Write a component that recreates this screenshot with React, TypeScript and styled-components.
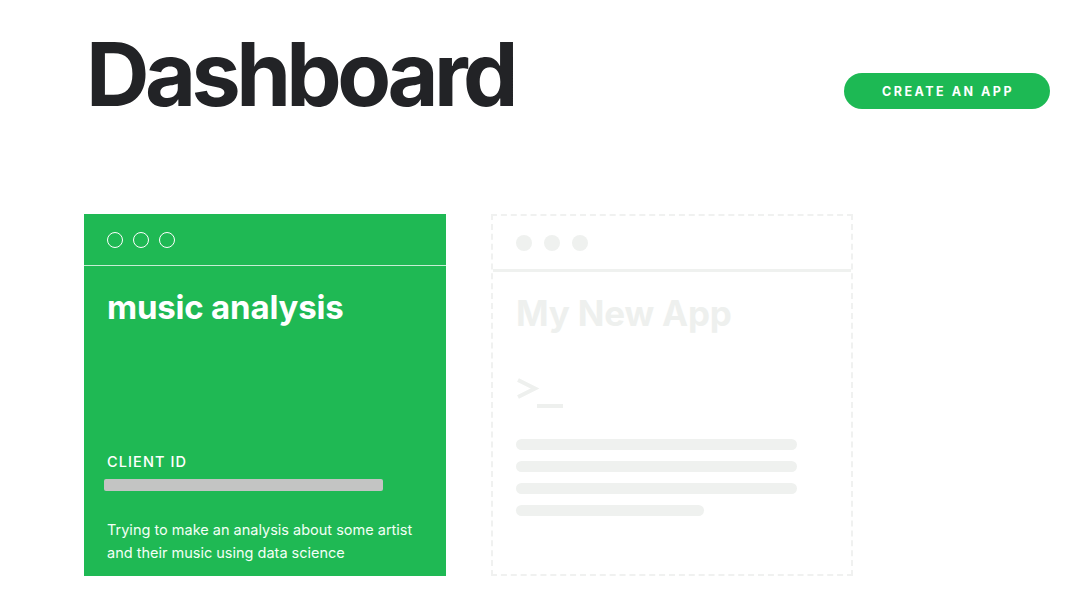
import React from "react";
import styled, { createGlobalStyle } from "styled-components";

const Global = createGlobalStyle`
  html, body { margin: 0; padding: 0; background: #ffffff; }
  body { font-family: "Inter", "Lato", sans-serif; }
`;

const Page = styled.div`
  width: 1072px;
  height: 609px;
  box-sizing: border-box;
  padding: 30px 22px 0 84px;
  overflow: hidden;
`;

const Header = styled.header`
  display: flex;
  justify-content: space-between;
  align-items: flex-start;
`;

const Title = styled.h1`
  margin: 0 0 0 2px;
  font-family: "Inter", sans-serif;
  font-weight: 700;
  font-size: 88px;
  line-height: 1;
  letter-spacing: -4.6px;
  color: #222326;
`;

const CreateButton = styled.button`
  margin-top: 43px;
  width: 206px;
  height: 36px;
  border: none;
  border-radius: 18px;
  background: #1db954;
  color: #ffffff;
  font-family: "Inter", sans-serif;
  font-weight: 700;
  font-size: 12.5px;
  letter-spacing: 2.5px;
  padding: 0 0 0 2px;
  cursor: pointer;
`;

const Cards = styled.div`
  display: flex;
  gap: 45px;
  margin-top: 96px;
`;

const Card = styled.div<{ $ghost?: boolean }>`
  width: 362px;
  height: 362px;
  box-sizing: border-box;
  display: flex;
  flex-direction: column;
  background: ${(p) => (p.$ghost ? "#ffffff" : "#1fb954")};
  border: ${(p) => (p.$ghost ? "2px dashed #f0f1f0" : "none")};
  color: #ffffff;
`;

const CardTop = styled.div<{ $ghost?: boolean }>`
  height: ${(p) => (p.$ghost ? "56px" : "52px")};
  flex: none;
  box-sizing: border-box;
  display: flex;
  align-items: center;
  gap: ${(p) => (p.$ghost ? "12px" : "10px")};
  padding-left: 23px;
  border-bottom: ${(p) =>
    p.$ghost ? "3px solid #eff1ef" : "1.5px solid rgba(255,255,255,0.75)"};
`;

const Dot = styled.span<{ $ghost?: boolean }>`
  width: 16px;
  height: 16px;
  box-sizing: border-box;
  border-radius: 50%;
  border: ${(p) => (p.$ghost ? "none" : "1px solid #ffffff")};
  background: ${(p) => (p.$ghost ? "#eff1ef" : "transparent")};
`;

const CardBody = styled.div`
  flex: 1;
  display: flex;
  flex-direction: column;
  padding: 21px 23px 0;
`;

const AppName = styled.h2<{ $ghost?: boolean }>`
  margin: 0;
  font-family: "Inter", sans-serif;
  font-weight: 700;
  font-size: ${(p) => (p.$ghost ? "35px" : "33px")};
  letter-spacing: -0.2px;
  line-height: 40px;
  color: ${(p) => (p.$ghost ? "#eef0ee" : "#ffffff")};
`;

const Label = styled.div`
  margin-top: 126px;
  font-family: "Inter", sans-serif;
  font-weight: 500;
  font-size: 14.5px;
  letter-spacing: 1.1px;
  line-height: 18px;
`;

const IdBar = styled.div`
  margin: 8px 0 0 -3px;
  width: 279px;
  height: 12px;
  border-radius: 2px;
  background: #c3c4c3;
`;

const Description = styled.p`
  margin: 27px 0 0;
  font-family: "Inter", sans-serif;
  font-weight: 400;
  font-size: 14.5px;
  line-height: 23px;
  color: #f2fff6;
`;

const Prompt = styled.div`
  margin-top: 44px;
  display: flex;
  height: 34px;
`;

const Lines = styled.div`
  margin-top: 28px;
  display: flex;
  flex-direction: column;
  gap: 11px;
`;

const Line = styled.div<{ $w: number }>`
  width: ${(p) => p.$w}px;
  height: 11px;
  border-radius: 6px;
  background: #eff1ef;
`;

export default function App() {
  return (
    <>
      <Global />
      <Page>
        <Header>
          <Title>Dashboard</Title>
          <CreateButton>CREATE AN APP</CreateButton>
        </Header>
        <Cards>
          <Card>
            <CardTop>
              <Dot />
              <Dot />
              <Dot />
            </CardTop>
            <CardBody>
              <AppName>music analysis</AppName>
              <Label>CLIENT ID</Label>
              <IdBar />
              <Description>
                Trying to make an analysis about some artist and their music
                using data science
              </Description>
            </CardBody>
          </Card>
          <Card $ghost>
            <CardTop $ghost>
              <Dot $ghost />
              <Dot $ghost />
              <Dot $ghost />
            </CardTop>
            <CardBody>
              <AppName $ghost>My New App</AppName>
              <Prompt>
                <svg width="48" height="34" viewBox="0 0 48 34" fill="none">
                  <path
                    d="M2 3 L19 11.5 L2 20"
                    stroke="#eef0ee"
                    strokeWidth="4"
                    strokeLinejoin="miter"
                  />
                  <rect x="21" y="27" width="26" height="4" fill="#eef0ee" />
                </svg>
              </Prompt>
              <Lines>
                <Line $w={281} />
                <Line $w={281} />
                <Line $w={281} />
                <Line $w={188} />
              </Lines>
            </CardBody>
          </Card>
        </Cards>
      </Page>
    </>
  );
}
